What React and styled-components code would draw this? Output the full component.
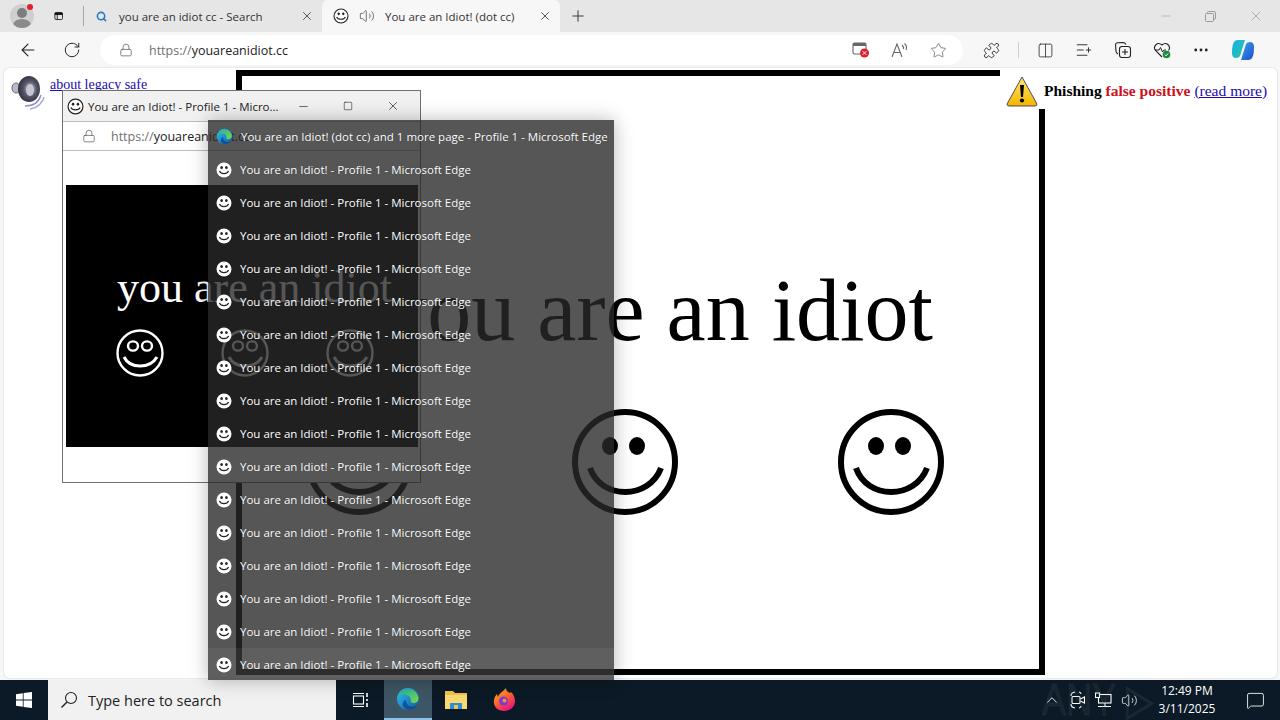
import React from 'react'
import styled, { createGlobalStyle } from 'styled-components'
import { ArrowLeft, RotateCw, Lock, Star, Puzzle, Columns2, ListPlus, MoreHorizontal, Plus, X, Minus, Square, Search, Volume2, ChevronUp, MessageSquare } from 'lucide-react'

const GlobalStyle = createGlobalStyle`
  html, body { margin: 0; padding: 0; overflow: hidden; background: #0b1a26; }
  * { box-sizing: border-box; }
`

const Screen = styled.div`
  position: relative;
  width: 1280px;
  height: 720px;
  overflow: hidden;
  display: flex;
  flex-direction: column;
  font-family: "Open Sans", "Noto Sans", sans-serif;
  background: #f7f7f7;
`

const TabBar = styled.div`
  height: 32px;
  flex: none;
  background: #e6e6e6;
  display: flex;
  align-items: stretch;
`

const TabLeft = styled.div`
  width: 84px;
  display: flex;
  align-items: center;
  gap: 20px;
  padding-left: 10px;
  color: #1a1a1a;
`

const Avatar = styled.div`
  position: relative;
  width: 24px;
  height: 24px;
  flex: none;
  border-radius: 50%;
  background: #cfcfcf;
  overflow: hidden;
  &::before {
    content: '';
    position: absolute;
    left: 7px;
    top: 4px;
    width: 10px;
    height: 10px;
    border-radius: 50%;
    background: #7d7d7d;
  }
  &::after {
    content: '';
    position: absolute;
    left: 3px;
    top: 15px;
    width: 18px;
    height: 12px;
    border-radius: 50%;
    background: #8a8a8a;
  }
`

const AvatarDot = styled.span`
  position: absolute;
  left: 27px;
  top: 4px;
  width: 6px;
  height: 6px;
  border-radius: 50%;
  background: #e0202a;
`

const TabSep = styled.span`
  width: 1px;
  height: 20px;
  background: #a8a8a8;
  align-self: center;
`

const Tab = styled.div`
  width: ${p => p.$w}px;
  display: flex;
  align-items: center;
  font-size: 11.5px;
  color: #333;
  background: ${p => (p.$active ? '#f7f7f7' : 'transparent')};
  padding-left: ${p => p.$pad}px;
  padding-right: 8px;
  border-radius: ${p => (p.$active ? '6px 6px 0 0' : '0')};
  white-space: nowrap;
`

const TabTitle = styled.span`
  flex: 1;
  margin-left: ${p => p.$ml}px;
`

const NewTab = styled.div`
  display: flex;
  align-items: center;
  padding-left: 9px;
  color: #333;
`

const WindowControls = styled.div`
  margin-left: auto;
  display: flex;
  align-items: center;
  gap: 32px;
  padding-right: 16px;
  color: #9a9a9a;
`

const Toolbar = styled.div`
  height: 36px;
  flex: none;
  display: flex;
  align-items: center;
  padding-left: 18px;
  color: #222;
`

const NavGroup = styled.div`
  display: flex;
  align-items: center;
  gap: 25px;
  width: 82px;
`

const AddressBar = styled.div`
  width: 863px;
  height: 30px;
  background: #fff;
  border-radius: 15px;
  display: flex;
  align-items: center;
  padding: 0 16px 0 19px;
  font-size: 12.5px;
  color: #222;
`

const Faint = styled.span`
  color: #707070;
`

const Url = styled.span`
  margin-left: 16px;
  flex: 1;
`

const AddressIcons = styled.div`
  display: flex;
  align-items: center;
  gap: 21px;
  color: #666;
`

const ToolIcons = styled.div`
  display: flex;
  align-items: center;
  margin-left: 20px;
  gap: 21px;
  color: #222;
`

const ToolSep = styled.span`
  width: 1px;
  height: 16px;
  background: #cfcfcf;
  margin: 0 -3px;
`

const Page = styled.div`
  position: relative;
  flex: 1;
  margin: 0 3px 2px 4px;
  background: #fff;
  border-radius: 6px;
  box-shadow: 0 0 2px #c8c8c8;
`

const LegacyRow = styled.a`
  position: absolute;
  left: 46px;
  top: 9px;
  font: 14px "Liberation Serif", serif;
  color: #1a0dab;
  text-decoration: underline;
`

const SpeakerWrap = styled.div`
  position: absolute;
  left: 7px;
  top: 7px;
`

const BigWindow = styled.div`
  position: absolute;
  left: 232px;
  top: 2px;
  width: 809px;
  height: 605px;
  border: 6px solid #000;
  background: #fff;
  display: flex;
  flex-direction: column;
  align-items: flex-end;
`

const BigTitle = styled.div`
  font: 88px/100px "Liberation Serif", serif;
  color: #000;
  margin-top: 185px;
  margin-right: 106px;
  white-space: nowrap;
`

const BigFaces = styled.div`
  display: flex;
  margin-top: 47px;
  width: 640px;
  margin-right: 94px;
  justify-content: space-between;
`

const WarnBox = styled.div`
  position: absolute;
  left: 996px;
  top: 0;
  width: 277px;
  height: 41px;
  background: #fff;
  border-radius: 0 6px 0 0;
  display: flex;
  align-items: center;
  padding-top: 4px;
  padding-left: 6px;
  font: 15.5px "Liberation Serif", serif;
  white-space: nowrap;
`

const WarnText = styled.span`
  margin-left: 6px;
  font-weight: bold;
  color: #000;
`

const WarnRed = styled.span`
  color: #d0101c;
`

const WarnLink = styled.a`
  margin-left: 4px;
  color: #1a0dab;
  text-decoration: underline;
`

const PopupWindow = styled.div`
  position: absolute;
  left: 62px;
  top: 90px;
  width: 359px;
  height: 393px;
  background: #fff;
  border: 1px solid #707070;
  display: flex;
  flex-direction: column;
`

const PopupTitleBar = styled.div`
  height: 30px;
  flex: none;
  background: #f1f1f1;
  display: flex;
  align-items: center;
  padding-left: 4px;
  font-size: 11.5px;
  color: #222;
  white-space: nowrap;
`

const PopupTitle = styled.span`
  margin-left: 4px;
  width: 209px;
`

const PopupControls = styled.div`
  display: flex;
  align-items: center;
  gap: 33px;
  margin-left: 0;
  color: #222;
`

const PopupAddress = styled.div`
  height: 30px;
  flex: none;
  border-top: 1px solid #bdbdbd;
  border-bottom: 1px solid #bdbdbd;
  display: flex;
  align-items: center;
  padding-left: 19px;
  font-size: 12.5px;
  color: #222;
  background: #fff;
`

const PopupStage = styled.div`
  margin: 34px 2px 0 3px;
  height: 262px;
  background: #000;
  color: #fff;
  padding: 78px 0 0 51px;
`

const PopupHeading = styled.div`
  font: 44px/50px "Liberation Serif", serif;
  white-space: nowrap;
`

const PopupFaces = styled.div`
  display: flex;
  gap: 57px;
  margin-top: 16px;
  margin-left: -1px;
`

const Flyout = styled.div`
  position: absolute;
  left: 208px;
  top: 120px;
  width: 406px;
  height: 560px;
  background: rgba(40, 40, 40, 0.79);
  box-shadow: 0 0 18px rgba(0, 0, 0, 0.28);
  overflow: hidden;
  color: #fff;
  font-size: 11.5px;
`

const FlyoutRow = styled.div`
  height: 33px;
  display: flex;
  align-items: center;
  padding-left: 8px;
  gap: 8px;
  white-space: nowrap;
  background: ${p => (p.$hot ? 'rgba(255,255,255,0.06)' : 'transparent')};
  text-shadow: 0 0 1px rgba(0, 0, 0, 0.4);
`

const Taskbar = styled.div`
  height: 40px;
  flex: none;
  background: #0b1a26;
  display: flex;
  align-items: stretch;
  color: #fff;
`

const StartButton = styled.div`
  width: 48px;
  display: flex;
  align-items: center;
  justify-content: center;
`

const SearchBox = styled.div`
  width: 288px;
  background: #f1f1f1;
  display: flex;
  align-items: center;
  padding-left: 12px;
  gap: 10px;
  font-size: 14.5px;
  color: #222;
`

const TaskIcon = styled.div`
  width: 48px;
  display: flex;
  align-items: center;
  justify-content: center;
  ${p => p.$active && 'background: #3d5564; border-bottom: 2px solid #8fc3ea;'}
`

const Tray = styled.div`
  margin-left: auto;
  display: flex;
  align-items: center;
  gap: 9px;
`

const Clock = styled.div`
  text-align: center;
  font-size: 12px;
  line-height: 18px;
  margin-left: 10px;
  width: 60px;
`

const Notify = styled.div`
  width: 50px;
  margin-left: 4px;
  display: flex;
  align-items: center;
  justify-content: center;
`

const Watermark = styled.div`
  position: absolute;
  left: 1038px;
  top: 606px;
  display: flex;
  align-items: center;
  font: 44px "Liberation Sans", sans-serif;
  color: rgba(120, 120, 120, 0.13);
  transform: scaleX(0.82);
  transform-origin: left center;
  pointer-events: none;
  -webkit-text-stroke: 1px rgba(120, 120, 120, 0.12);
`

// the black outline smiley from the big window, filled eyes
const BigFace = ({ color = '#000', size = 108 }) => (
  <svg width={size} height={size} viewBox="0 0 108 108">
    <circle cx="54" cy="54" r="50" fill="none" stroke={color} strokeWidth="6" />
    <ellipse cx="39" cy="38" rx="8" ry="9" fill={color} />
    <ellipse cx="66" cy="38" rx="8" ry="9" fill={color} />
    <path d="M19 60 C30 92 78 92 90 60" fill="none" stroke={color} strokeWidth="6" />
  </svg>
)

const OpenFace = ({ color = '#fff' }) => (
  <svg width="48" height="48" viewBox="0 0 48 48">
    <circle cx="24" cy="24" r="22.5" fill="none" stroke={color} strokeWidth="2.4" />
    <ellipse cx="17" cy="17" rx="5" ry="4.6" fill="none" stroke={color} strokeWidth="2.4" />
    <ellipse cx="31" cy="17" rx="5" ry="4.6" fill="none" stroke={color} strokeWidth="2.4" />
    <path d="M8 28 C14 40 34 40 41 28" fill="none" stroke={color} strokeWidth="3" />
  </svg>
)

const TinyFace = () => (
  <svg width="16" height="16" viewBox="0 0 16 16" style={{ flex: 'none' }}>
    <circle cx="8" cy="8" r="7.5" fill="#fff" />
    <ellipse cx="5.6" cy="5.6" rx="1.3" ry="1.5" fill="#222" />
    <ellipse cx="10.4" cy="5.6" rx="1.3" ry="1.5" fill="#222" />
    <path d="M3.4 9 C5 12.6 11 12.6 12.6 9" fill="none" stroke="#222" strokeWidth="1.2" />
  </svg>
)

const LineFace = ({ size = 16 }) => (
  <svg width={size} height={size} viewBox="0 0 16 16" style={{ flex: 'none' }}>
    <circle cx="8" cy="8" r="7" fill="#fff" stroke="#222" strokeWidth="1.1" />
    <ellipse cx="5.7" cy="5.8" rx="1.2" ry="1.4" fill="#222" />
    <ellipse cx="10.3" cy="5.8" rx="1.2" ry="1.4" fill="#222" />
    <path d="M3.6 9 C5 12 11 12 12.4 9" fill="none" stroke="#222" strokeWidth="1.1" />
  </svg>
)

const EdgeLogo = ({ size = 18 }) => (
  <svg width={size} height={size} viewBox="0 0 24 24" style={{ flex: 'none' }}>
    <defs>
      <linearGradient id="edgeA" x1="0" y1="0" x2="1" y2="1">
        <stop offset="0" stopColor="#35c1f1" />
        <stop offset="1" stopColor="#0c59a4" />
      </linearGradient>
      <linearGradient id="edgeB" x1="0" y1="0" x2="1" y2="1">
        <stop offset="0" stopColor="#1bb0a0" />
        <stop offset="1" stopColor="#7ed84a" />
      </linearGradient>
    </defs>
    <circle cx="12" cy="12" r="11" fill="url(#edgeA)" />
    <path d="M2 10 C4 2 16 -1 21 7 C24 12 22 16 17 16 C13 16 17 10 11 8 C7 7 3 8 2 10Z" fill="url(#edgeB)" />
    <path d="M10 13 C10 18 15 22 21 18 C18 24 9 24 7 19 C6 16 8 13 10 13Z" fill="#0b3f88" opacity="0.7" />
  </svg>
)

const Speaker = () => (
  <svg width="34" height="36" viewBox="0 0 34 36">
    <defs>
      <radialGradient id="cone" cx="0.55" cy="0.5" r="0.6">
        <stop offset="0" stopColor="#d8d8e0" />
        <stop offset="0.5" stopColor="#55556a" />
        <stop offset="1" stopColor="#2a2a35" />
      </radialGradient>
    </defs>
    <ellipse cx="5" cy="13" rx="4" ry="5" fill="#b9b9c9" stroke="#666" />
    <ellipse cx="18" cy="14" rx="11" ry="13" fill="url(#cone)" />
    <ellipse cx="19" cy="15" rx="4" ry="6" fill="#c7c7d2" />
    <path d="M14 31 C22 31 28 27 30 20" fill="none" stroke="#8f8fc6" strokeWidth="1.4" />
    <path d="M19 34 C27 33 32 27 33 22" fill="none" stroke="#a5a5d4" strokeWidth="1.4" />
  </svg>
)

const WarningIcon = () => (
  <svg width="32" height="32" viewBox="0 0 32 32" style={{ flex: 'none' }}>
    <defs>
      <linearGradient id="warn" x1="0" y1="0" x2="0" y2="1">
        <stop offset="0" stopColor="#ffe866" />
        <stop offset="1" stopColor="#f2b600" />
      </linearGradient>
    </defs>
    <path d="M16 2 L31 29 Q31 31 29 31 L3 31 Q1 31 1 29 Z" fill="url(#warn)" stroke="#2a2060" strokeWidth="0.8" />
    <path d="M14 10 H18 L17 22 H15 Z" fill="#000" />
    <circle cx="16" cy="25.5" r="2.1" fill="#000" />
  </svg>
)

const TabsIcon = () => (
  <svg width="16" height="16" viewBox="0 0 16 16" fill="none" stroke="#111" strokeWidth="1.4">
    <rect x="1.5" y="2" width="13" height="12" rx="2" />
    <path d="M1.5 5.5 H14.5 M5.5 5.5 V14" />
    <path d="M2 3 H14 V5 H2Z" fill="#111" />
  </svg>
)

const RestoreIcon = () => (
  <svg width="11" height="11" viewBox="0 0 11 11" fill="none" stroke="currentColor">
    <rect x="0.5" y="2.5" width="8" height="8" rx="1" />
    <path d="M2.5 2.5 V1.5 Q2.5 0.5 3.5 0.5 H9 Q10.5 0.5 10.5 2 V7.5 Q10.5 8.5 8.5 8.5" />
  </svg>
)

const ReadAloud = () => (
  <svg width="18" height="16" viewBox="0 0 18 16" fill="none" stroke="currentColor" strokeWidth="1.1">
    <path d="M1 15 L6 2 L11 15 M3 10.5 H9" />
    <path d="M11 3 Q13 5 12.5 7 M13.5 1.5 Q16.5 4 15 8" />
  </svg>
)

const BlockedPopup = () => (
  <svg width="18" height="16" viewBox="0 0 18 16">
    <rect x="1" y="1" width="13" height="11" rx="1.5" fill="none" stroke="#666" strokeWidth="1.1" />
    <rect x="1" y="1" width="13" height="3" fill="#666" />
    <circle cx="12.5" cy="11" r="4.5" fill="#e02030" />
    <path d="M10.8 9.3 L14.2 12.7 M14.2 9.3 L10.8 12.7" stroke="#fff" strokeWidth="1" />
  </svg>
)

const Collections = () => (
  <svg width="18" height="18" viewBox="0 0 18 18" fill="none" stroke="currentColor" strokeWidth="1.1">
    <rect x="5.5" y="5.5" width="11" height="11" rx="2.5" />
    <path d="M11 8 V14 M8 11 H14" />
    <path d="M4 13 Q2 12 2 10 L1.5 4 Q1.5 2 3.5 1.8 L9 1.5 Q11 1.5 12 3.5" />
  </svg>
)

const HealthHeart = () => (
  <svg width="18" height="18" viewBox="0 0 18 18">
    <path d="M9 16 L2.5 9.5 C-0.5 5.5 4.5 0 9 4 C13.5 0 18.5 5.5 15.5 9.5" fill="none" stroke="#222" strokeWidth="1.1" />
    <path d="M2 9 H6 L7.5 6.5 L9.5 11 L11 9 H13" fill="none" stroke="#222" strokeWidth="1" />
    <circle cx="13.5" cy="13.5" r="3.8" fill="#1c8a3c" />
    <path d="M11.8 13.6 L13 14.8 L15.2 12.4" fill="none" stroke="#fff" strokeWidth="1" />
  </svg>
)

const Copilot = () => (
  <svg width="24" height="24" viewBox="0 0 24 24">
    <defs>
      <linearGradient id="copA" x1="0" y1="0" x2="1" y2="1">
        <stop offset="0" stopColor="#1bb0e8" />
        <stop offset="1" stopColor="#22c7a0" />
      </linearGradient>
      <linearGradient id="copB" x1="0" y1="0" x2="1" y2="1">
        <stop offset="0" stopColor="#3aa0f0" />
        <stop offset="1" stopColor="#1b4fc8" />
      </linearGradient>
    </defs>
    <path d="M7 2 H14 L9 18 Q8 20 5 20 Q1 20 1 15 Q1 5 4 3 Q5 2 7 2Z" fill="url(#copA)" />
    <path d="M17 22 H10 L15 6 Q16 4 19 4 Q23 4 23 9 Q23 19 20 21 Q19 22 17 22Z" fill="url(#copB)" />
  </svg>
)

const WindowsLogo = () => (
  <svg width="16" height="16" viewBox="0 0 16 16" fill="#fff">
    <path d="M0 2.2 L6.8 1.2 V7.5 H0Z M7.6 1.1 L16 0 V7.5 H7.6Z M0 8.4 H6.8 V14.8 L0 13.8Z M7.6 8.4 H16 V16 L7.6 14.9Z" />
  </svg>
)

const TaskView = () => (
  <svg width="17" height="16" viewBox="0 0 17 16" fill="none" stroke="#fff" strokeWidth="1.1">
    <rect x="1.5" y="4" width="10" height="8" />
    <path d="M1 1.5 H12 M1 14.5 H12" />
    <path d="M15 1 V5 M15 7 V9 M15 11 V15" strokeWidth="1.6" />
  </svg>
)

const Explorer = () => (
  <svg width="22" height="20" viewBox="0 0 22 20">
    <path d="M0 1 H8 L10 3 H22 V19 H0Z" fill="#f2c14e" />
    <rect x="0" y="5" width="22" height="14" fill="#fbd971" />
    <rect x="5" y="13" width="12" height="6" fill="#2b8ed6" />
    <rect x="9" y="15" width="4" height="4" fill="#f2c14e" />
  </svg>
)

const Firefox = () => (
  <svg width="22" height="24" viewBox="0 0 22 24">
    <defs>
      <linearGradient id="fox" x1="0" y1="0" x2="0.6" y2="1">
        <stop offset="0" stopColor="#ffc21a" />
        <stop offset="0.6" stopColor="#ff5a2e" />
        <stop offset="1" stopColor="#e31587" />
      </linearGradient>
    </defs>
    <path d="M11 23 C4 23 0 18 1 12 C1.5 9 3 7 4 6 L5 9 C6 5 10 4 13 0 C13 3 15 4 17 5 L18 4 C21 7 22 10 22 13 C22 19 17 23 11 23Z" fill="url(#fox)" />
    <circle cx="10.5" cy="13" r="4.5" fill="#7a3bd0" />
    <circle cx="11.5" cy="12.5" r="2" fill="#ff8a3c" />
  </svg>
)

const MeetNow = () => (
  <svg width="16" height="18" viewBox="0 0 16 18" fill="none" stroke="#fff" strokeWidth="1.1">
    <path d="M1 5 Q1 1.5 5 1 M9 1 Q11 1.5 11 3 M1 13 Q1 16.5 5 17 M9 17 Q11 16.5 11 15" />
    <rect x="2" y="5.5" width="8" height="7" rx="1" />
    <path d="M10.5 8 L14.5 6 V12 L10.5 10" />
  </svg>
)

const NetworkTray = () => (
  <svg width="17" height="16" viewBox="0 0 17 16" fill="none" stroke="#fff" strokeWidth="1.1">
    <rect x="3.5" y="2.5" width="12.5" height="8.5" />
    <rect x="0.5" y="1" width="4" height="4.5" fill="#0b1a26" />
    <path d="M10 11 V14 M3 14.5 H16" />
  </svg>
)

const rows = Array.from({ length: 16 })

export default function App() {
  return (
    <>
      <GlobalStyle />
      <Screen>
        <TabBar>
          <TabLeft>
            <Avatar />
            <AvatarDot />
            <TabsIcon />
            <TabSep />
          </TabLeft>
          <Tab $w={238} $pad={12}>
            <Search size={11} color="#2b7cc4" strokeWidth={3.5} />
            <TabTitle $ml={12}>you are an idiot cc - Search</TabTitle>
            <X size={14} strokeWidth={1.4} />
          </Tab>
          <Tab $w={238} $active $pad={11}>
            <LineFace />
            <Volume2 size={16} strokeWidth={1} style={{ marginLeft: 10 }} />
            <TabTitle $ml={10}>You are an Idiot! (dot cc)</TabTitle>
            <X size={14} strokeWidth={1.4} />
          </Tab>
          <NewTab><Plus size={18} strokeWidth={1.3} /></NewTab>
          <WindowControls>
            <Minus size={14} strokeWidth={1} />
            <RestoreIcon />
            <X size={16} strokeWidth={1} />
          </WindowControls>
        </TabBar>

        <Toolbar>
          <NavGroup>
            <ArrowLeft size={20} strokeWidth={1.3} />
            <RotateCw size={18} strokeWidth={1.3} />
          </NavGroup>
          <AddressBar>
            <Lock size={14} strokeWidth={1.2} color="#555" />
            <Url><Faint>https://</Faint>youareanidiot.cc</Url>
            <AddressIcons>
              <BlockedPopup />
              <ReadAloud />
              <Star size={17} strokeWidth={1.1} />
            </AddressIcons>
          </AddressBar>
          <ToolIcons>
            <Puzzle size={17} strokeWidth={1.2} />
            <ToolSep />
            <Columns2 size={17} strokeWidth={1.1} />
            <ListPlus size={18} strokeWidth={1.2} />
            <Collections />
            <HealthHeart />
            <MoreHorizontal size={18} strokeWidth={1.8} />
            <Copilot />
          </ToolIcons>
        </Toolbar>

        <Page>
          <SpeakerWrap><Speaker /></SpeakerWrap>
          <LegacyRow>about legacy safe</LegacyRow>
          <BigWindow>
            <BigTitle>you are an idiot</BigTitle>
            <BigFaces>
              <BigFace />
              <BigFace />
              <BigFace />
            </BigFaces>
          </BigWindow>
          <WarnBox>
            <WarningIcon />
            <WarnText>Phishing <WarnRed>false positive</WarnRed></WarnText>
            <WarnLink>(read more)</WarnLink>
          </WarnBox>
          <Watermark>ANY ▷ RUN</Watermark>
        </Page>

        <Taskbar>
          <StartButton><WindowsLogo /></StartButton>
          <SearchBox>
            <svg width="18" height="18" viewBox="0 0 18 18" fill="none" stroke="#222" strokeWidth="1.1">
              <circle cx="11" cy="7" r="5.5" />
              <path d="M7 11 L1.5 16.5" strokeWidth="1.4" />
            </svg>
            Type here to search
          </SearchBox>
          <TaskIcon><TaskView /></TaskIcon>
          <TaskIcon $active><EdgeLogo size={24} /></TaskIcon>
          <TaskIcon><Explorer /></TaskIcon>
          <TaskIcon><Firefox /></TaskIcon>
          <Tray>
            <ChevronUp size={18} strokeWidth={1.2} />
            <MeetNow />
            <NetworkTray />
            <Volume2 size={17} strokeWidth={1.1} />
            <Clock>12:49 PM<br />3/11/2025</Clock>
            <Notify><MessageSquare size={19} strokeWidth={1.1} /></Notify>
          </Tray>
        </Taskbar>

        <PopupWindow>
          <PopupTitleBar>
            <LineFace size={17} />
            <PopupTitle>You are an Idiot! - Profile 1 - Micro...</PopupTitle>
            <PopupControls>
              <Minus size={13} strokeWidth={1.2} />
              <Square size={10} strokeWidth={1.4} />
              <X size={14} strokeWidth={1.2} />
            </PopupControls>
          </PopupTitleBar>
          <PopupAddress>
            <Lock size={14} strokeWidth={1.2} color="#555" />
            <Url style={{ marginLeft: 15 }}><Faint>https://</Faint>youareanidiot.cc</Url>
          </PopupAddress>
          <PopupStage>
            <PopupHeading>you are an idiot</PopupHeading>
            <PopupFaces>
              <OpenFace />
              <OpenFace />
              <OpenFace />
            </PopupFaces>
          </PopupStage>
        </PopupWindow>

        <Flyout>
          <FlyoutRow>
            <EdgeLogo size={17} />
            You are an Idiot! (dot cc) and 1 more page - Profile 1 - Microsoft Edge
          </FlyoutRow>
          {rows.map((_, i) => (
            <FlyoutRow key={i} $hot={i === 15}>
              <TinyFace />
              You are an Idiot! - Profile 1 - Microsoft Edge
            </FlyoutRow>
          ))}
        </Flyout>
      </Screen>
    </>
  )
}
